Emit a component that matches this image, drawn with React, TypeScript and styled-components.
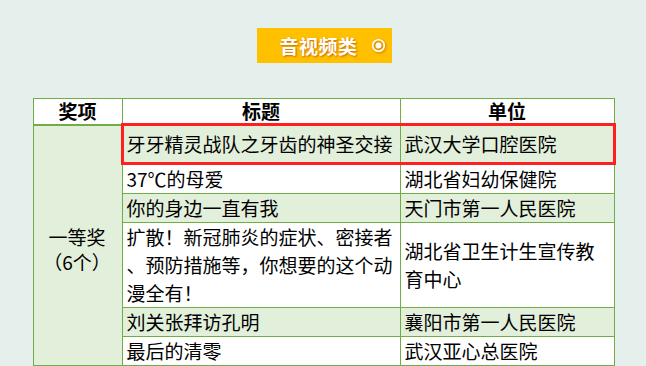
import styled, { createGlobalStyle } from 'styled-components';

const GREEN = '#70ad47';
const LIGHT_GREEN = '#e2efda';
const RED = '#ff1f1f';
const GOLD = '#ffc000';
const PAGE_BG = '#e5f0ed';
const FONT = '"Noto Sans CJK SC", "Noto Sans", sans-serif';

const GlobalStyle = createGlobalStyle`
  html, body {
    margin: 0;
    padding: 0;
    background: ${PAGE_BG};
    overflow: hidden;
  }
  body {
    font-family: ${FONT};
  }
`;

const Page = styled.div`
  display: flex;
  flex-direction: column;
  align-items: center;
  padding-top: 28px;
  gap: 35px;
  padding-left: 2px;
`;

const CategoryButton = styled.div`
  width: 135px;
  height: 35px;
  box-sizing: border-box;
  background: ${GOLD};
  display: flex;
  align-items: center;
  justify-content: flex-end;
  gap: 13px;
  padding-right: 6px;
  color: #fff;
  font-size: 19px;
  font-weight: 700;
  text-shadow: 1px 1px 2px rgba(190, 90, 0, 0.85);
`;

const ButtonLabel = styled.span`
  line-height: 35px;
  letter-spacing: 0.5px;
`;

const Table = styled.table`
  border-collapse: collapse;
  table-layout: fixed;
  width: 581px;
  font-size: 19px;
  line-height: 28px;
  color: #000;
`;

const HeadCell = styled.th`
  border: 1px solid ${GREEN};
  border-bottom-width: 2px;
  background: #fff;
  font-weight: 700;
  text-align: center;
  padding: 0;
  line-height: 24px;
`;

const AwardCell = styled.td`
  border: 1px solid ${GREEN};
  background: ${LIGHT_GREEN};
  text-align: center;
  vertical-align: middle;
  line-height: 25px;
  padding: 7px 0 0;
`;

const Cell = styled.td<{ $shaded: boolean; $marked: boolean; $side: 'title' | 'unit' }>`
  border: 1px solid ${GREEN};
  background: ${(p) => (p.$shaded ? LIGHT_GREEN : '#fff')};
  vertical-align: middle;
  white-space: nowrap;
  padding: ${(p) => (p.$marked ? '4px 4px 4px 3px' : '0 4px 0 4px')};
  ${(p) => p.$side === 'unit' && 'white-space: normal;'}
  ${(p) =>
    p.$marked &&
    `
    border-top: 3px solid ${RED};
    border-bottom: 3px solid ${RED};
    ${p.$side === 'title' ? `border-left: 3px solid ${RED};` : `border-right: 3px solid ${RED}; padding-left: 4px;`}
  `}
`;

function RadioIcon() {
  return (
    <svg width="15" height="15" viewBox="0 0 15 15" style={{ filter: 'drop-shadow(1px 1px 1px rgba(190,90,0,0.7))' }}>
      <circle cx="7.5" cy="7.5" r="5.8" fill="none" stroke="#fff" strokeWidth="1.6" />
      <circle cx="7.5" cy="7.5" r="2.9" fill="#fff" />
    </svg>
  );
}

const rows: { title: string[]; unit: string }[] = [
  { title: ['牙牙精灵战队之牙齿的神圣交接'], unit: '武汉大学口腔医院' },
  { title: ['37℃的母爱'], unit: '湖北省妇幼保健院' },
  { title: ['你的身边一直有我'], unit: '天门市第一人民医院' },
  {
    title: ['扩散！新冠肺炎的症状、密接者', '、预防措施等，你想要的这个动', '漫全有！'],
    unit: '湖北省卫生计生宣传教育中心',
  },
  { title: ['刘关张拜访孔明'], unit: '襄阳市第一人民医院' },
  { title: ['最后的清零'], unit: '武汉亚心总医院' },
];

export default function App() {
  return (
    <>
      <GlobalStyle />
      <Page>
        <CategoryButton>
          <ButtonLabel>音视频类</ButtonLabel>
          <RadioIcon />
        </CategoryButton>
        <Table>
          <colgroup>
            <col style={{ width: 89 }} />
            <col style={{ width: 278 }} />
            <col style={{ width: 214 }} />
          </colgroup>
          <thead>
            <tr>
              <HeadCell>奖项</HeadCell>
              <HeadCell>标题</HeadCell>
              <HeadCell>单位</HeadCell>
            </tr>
          </thead>
          <tbody>
            {rows.map((row, i) => (
              <tr key={row.unit}>
                {i === 0 && (
                  <AwardCell rowSpan={rows.length}>
                    一等奖
                    <br />
                    （6个）
                  </AwardCell>
                )}
                <Cell $shaded={i % 2 === 0} $marked={i === 0} $side="title">
                  {row.title.map((line, j) => (
                    <span key={j}>
                      {j > 0 && <br />}
                      {line}
                    </span>
                  ))}
                </Cell>
                <Cell $shaded={i % 2 === 0} $marked={i === 0} $side="unit">
                  {row.unit}
                </Cell>
              </tr>
            ))}
          </tbody>
        </Table>
      </Page>
    </>
  );
}
